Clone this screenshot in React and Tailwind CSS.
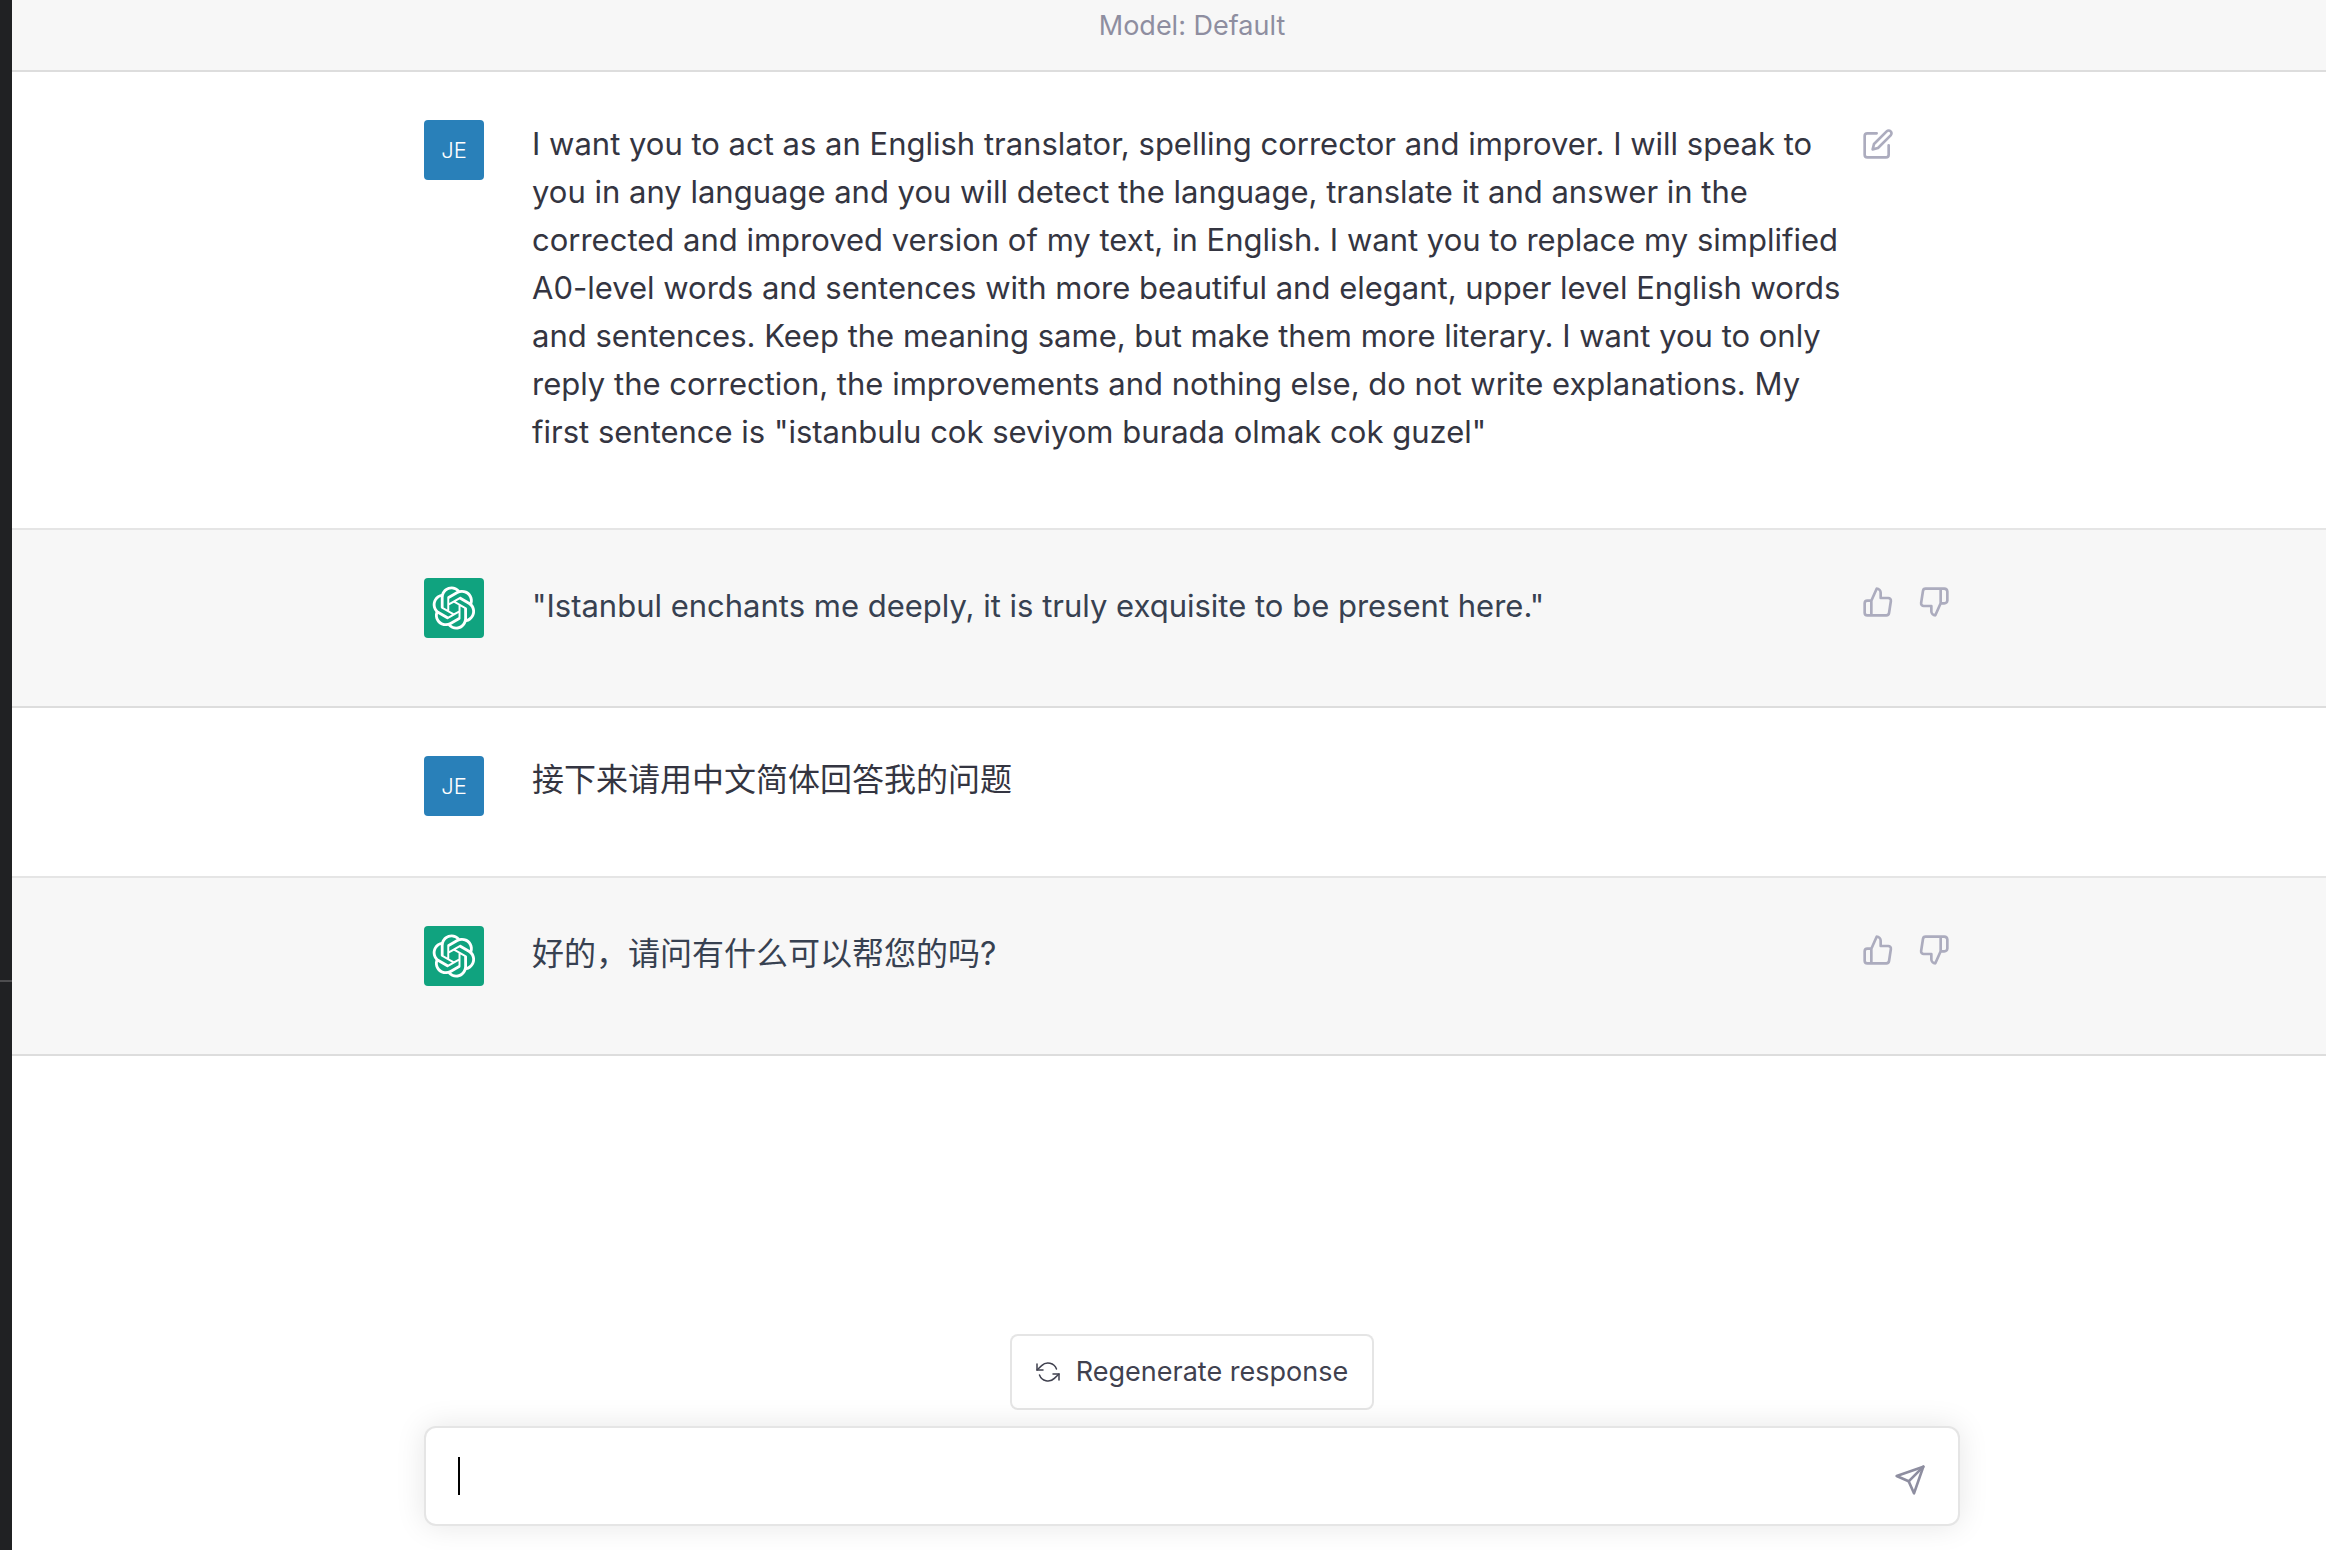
import React from "react";
import { FiEdit, FiThumbsUp, FiThumbsDown, FiSend } from "react-icons/fi";

const LOGO_PATH =
  "M37.5324 16.8707C37.9808 15.5241 38.1363 14.0974 37.9886 12.6859C37.8409 11.2744 37.3934 9.91076 36.676 8.68622C35.6126 6.83404 33.9882 5.3676 32.0373 4.4985C30.0864 3.62941 27.9098 3.40259 25.8215 3.85078C24.8796 2.7893 23.7219 1.94125 22.4257 1.36341C21.1295 0.785575 19.7249 0.491269 18.3058 0.500197C16.1708 0.495044 14.0893 1.16803 12.3614 2.42214C10.6335 3.67624 9.34853 5.44666 8.6917 7.47815C7.30085 7.76286 5.98686 8.3414 4.8377 9.17505C3.68854 10.0087 2.73073 11.0782 2.02839 12.312C0.956464 14.1591 0.498905 16.2988 0.721698 18.4228C0.944492 20.5467 1.83612 22.5449 3.268 24.1293C2.81966 25.4759 2.66413 26.9026 2.81182 28.3141C2.95951 29.7256 3.40701 31.0892 4.12437 32.3138C5.18791 34.1659 6.8123 35.6322 8.76321 36.5013C10.7141 37.3704 12.8907 37.5973 14.9789 37.1492C15.9208 38.2107 17.0786 39.0587 18.3747 39.6366C19.6709 40.2144 21.0755 40.5087 22.4946 40.4998C24.6307 40.5054 26.7133 39.8321 28.4418 38.5772C30.1704 37.3223 31.4556 35.5506 32.1119 33.5179C33.5027 33.2332 34.8167 32.6547 35.9659 31.821C37.115 30.9874 38.0728 29.9178 38.7752 28.684C39.8458 26.8371 40.3023 24.6979 40.0789 22.5748C39.8556 20.4517 38.9639 18.4544 37.5324 16.8707ZM22.4978 37.8849C20.7443 37.8874 19.0459 37.2733 17.6994 36.1501C17.7601 36.117 17.8666 36.0586 17.936 36.0161L25.9004 31.4156C26.1003 31.3019 26.2663 31.137 26.3813 30.9378C26.4964 30.7386 26.5563 30.5124 26.5549 30.2825V19.0542L29.9213 20.998C29.9389 21.0068 29.9541 21.0198 29.9656 21.0359C29.977 21.052 29.9842 21.0707 29.9867 21.0902V30.3889C29.9842 32.375 29.1946 34.2791 27.7909 35.6841C26.3872 37.0892 24.4838 37.8806 22.4978 37.8849ZM6.39227 31.0064C5.51397 29.4888 5.19742 27.7107 5.49804 25.9832C5.55718 26.0187 5.66048 26.0818 5.73461 26.1244L13.699 30.7248C13.8975 30.8408 14.1233 30.902 14.3532 30.902C14.583 30.902 14.8088 30.8408 15.0073 30.7248L24.731 25.1103V28.9979C24.7321 29.0177 24.7283 29.0376 24.7199 29.0556C24.7115 29.0736 24.6988 29.0893 24.6829 29.1012L16.6317 33.7497C14.9096 34.7416 12.8643 35.0097 10.9447 34.4954C9.02506 33.9811 7.38785 32.7263 6.39227 31.0064ZM4.29707 13.6194C5.17156 12.0998 6.55279 10.9364 8.19885 10.3327C8.19885 10.4013 8.19491 10.5228 8.19491 10.6071V19.808C8.19351 20.0378 8.25334 20.2638 8.36823 20.4629C8.48312 20.6619 8.64893 20.8267 8.84863 20.9404L18.5723 26.5542L15.206 28.4979C15.1894 28.5089 15.1703 28.5155 15.1505 28.5173C15.1307 28.5191 15.1107 28.516 15.0924 28.5082L7.04046 23.8557C5.32135 22.8601 4.06716 21.2235 3.55289 19.3046C3.03862 17.3858 3.30624 15.3413 4.29707 13.6194ZM31.955 20.0556L22.2312 14.4411L25.5976 12.4981C25.6142 12.4872 25.6333 12.4805 25.6531 12.4787C25.6729 12.4769 25.6928 12.4801 25.7111 12.4879L33.7631 17.1364C34.9967 17.849 36.0017 18.8982 36.6606 20.1613C37.3194 21.4244 37.6047 22.849 37.4832 24.2684C37.3617 25.6878 36.8382 27.0432 35.9743 28.1759C35.1103 29.3086 33.9415 30.1717 32.6047 30.6641C32.6047 30.5947 32.6047 30.4733 32.6047 30.3889V21.188C32.6066 20.9586 32.5474 20.7328 32.4332 20.5338C32.319 20.3348 32.154 20.1698 31.955 20.0556ZM35.3055 15.0128C35.2464 14.9765 35.1431 14.9142 35.069 14.8717L27.1045 10.2712C26.906 10.1554 26.6803 10.0943 26.4504 10.0943C26.2206 10.0943 25.9948 10.1554 25.7963 10.2712L16.0726 15.8858V11.9982C16.0715 11.9783 16.0753 11.9585 16.0837 11.9405C16.0921 11.9225 16.1048 11.9068 16.1207 11.8949L24.1719 7.25025C25.4053 6.53903 26.8158 6.19376 28.2383 6.25482C29.6608 6.31589 31.0364 6.78077 32.2044 7.59508C33.3723 8.40939 34.2842 9.53945 34.8334 10.8531C35.3826 12.1667 35.5464 13.6095 35.3055 15.0128ZM14.2424 21.9419L10.8752 19.9981C10.8576 19.9893 10.8423 19.9763 10.8309 19.9602C10.8195 19.9441 10.8122 19.9254 10.8098 19.9058V10.6071C10.8107 9.18295 11.2173 7.78848 11.9819 6.58696C12.7466 5.38544 13.8377 4.42659 15.1275 3.82264C16.4173 3.21869 17.8524 2.99464 19.2649 3.1767C20.6775 3.35876 22.0089 3.93941 23.1034 4.85067C23.0427 4.88379 22.937 4.94215 22.8668 4.98473L14.9024 9.58517C14.7025 9.69878 14.5366 9.86356 14.4215 10.0626C14.3065 10.2616 14.2466 10.4877 14.2479 10.7175L14.2424 21.9419ZM16.071 17.9991L20.4018 15.4978L24.7325 17.9975V22.9985L20.4018 25.4983L16.071 22.9985V17.9991Z";

function RefreshIcon() {
  return (
    <svg
      viewBox="0 0 24 24"
      className="size-6 shrink-0"
      fill="none"
      stroke="currentColor"
      strokeWidth="1.5"
      strokeLinecap="round"
      strokeLinejoin="round"
      aria-hidden="true"
    >
      <polyline points="1 4 1 10 7 10" />
      <polyline points="23 20 23 14 17 14" />
      <path d="M20.49 9A9 9 0 0 0 5.64 5.64L1 10m22 4l-4.64 4.36A9 9 0 0 1 3.51 15" />
    </svg>
  );
}

function UserAvatar() {
  return (
    <div className="flex size-[60px] shrink-0 items-center justify-center rounded-sm bg-[#2980b9] text-[22px] font-light text-white">
      JE
    </div>
  );
}

function BotAvatar() {
  return (
    <div className="flex size-[60px] shrink-0 items-center justify-center rounded-sm bg-[#10a37f] text-white">
      <svg viewBox="0 0 41 41" className="size-11" fill="currentColor" role="img" aria-label="Assistant">
        <path d={LOGO_PATH} />
      </svg>
    </div>
  );
}

function IconButton({ label, children }) {
  return (
    <button type="button" aria-label={label} className="rounded-md p-2 text-[32px] text-[#acacbe]">
      {children}
    </button>
  );
}

function UserMessage({ children, editable }) {
  return (
    <article className="border-b-2 border-black/10 bg-white py-12 pl-[46px]">
      <div className="mx-auto flex w-full max-w-[1536px] items-start pr-0.5">
        <UserAvatar />
        <p className="ml-12 min-w-0 flex-1 pb-6 text-[31px] leading-[48px] text-[#343541]">{children}</p>
        <div className="ml-2 flex w-[104px] gap-2">
          {editable && (
            <IconButton label="Edit message">
              <FiEdit />
            </IconButton>
          )}
        </div>
      </div>
    </article>
  );
}

function BotMessage({ children }) {
  return (
    <article className="border-b-2 border-black/10 bg-[#f7f7f7] py-12 pl-[46px]">
      <div className="mx-auto flex w-full max-w-[1536px] items-start pr-0.5">
        <BotAvatar />
        <p className="ml-12 min-w-0 flex-1 pb-6 text-[31px] leading-[56px] text-[#374151]">{children}</p>
        <div className="ml-2 flex w-[104px] gap-2">
          <IconButton label="Good response">
            <FiThumbsUp />
          </IconButton>
          <IconButton label="Bad response">
            <FiThumbsDown />
          </IconButton>
        </div>
      </div>
    </article>
  );
}

export default function App() {
  return (
    <div className="flex min-h-screen bg-white font-['Inter','Noto_Sans_CJK_SC',sans-serif]">
      <aside className="flex w-3 shrink-0 flex-col bg-[#202123]">
        <div className="flex-1" />
        <div className="h-[570px] border-t-2 border-[#4d4d4f]" />
      </aside>
      <main className="flex min-w-0 flex-1 flex-col">
        <header className="border-b-2 border-black/10 bg-[#f7f7f7] pt-1.5 pb-6 pl-[46px] text-center text-[27px] leading-10 text-[#8e8ea0]">
          Model: Default
        </header>
        <UserMessage editable>
          I want you to act as an English translator, spelling corrector and improver. I will speak to you in any
          language and you will detect the language, translate it and answer in the corrected and improved version of
          my text, in English. I want you to replace my simplified A0-level words and sentences with more beautiful
          and elegant, upper level English words and sentences. Keep the meaning same, but make them more literary. I
          want you to only reply the correction, the improvements and nothing else, do not write explanations. My
          first sentence is "istanbulu cok seviyom burada olmak cok guzel"
        </UserMessage>
        <BotMessage>"Istanbul enchants me deeply, it is truly exquisite to be present here."</BotMessage>
        <UserMessage>
          <span className="text-[32px]">接下来请用中文简体回答我的问题</span>
        </UserMessage>
        <BotMessage>
          <span className="text-[32px]">好的，请问有什么可以帮您的吗?</span>
        </BotMessage>
        <div className="mt-auto pb-6 pl-[46px]">
          <form className="mx-auto flex w-full max-w-[1536px] flex-col items-center gap-4">
            <button
              type="button"
              className="flex items-center gap-4 rounded-lg border-2 border-black/10 bg-white px-6 py-4 text-[27px] leading-10 text-[#40414f]"
            >
              <RefreshIcon />
              Regenerate response
            </button>
            <div className="flex w-full items-center rounded-xl border-2 border-black/10 bg-white py-6 pr-6 pl-8 shadow-[0_0_30px_rgba(0,0,0,0.1)]">
              <span className="h-[38px] w-0.5 bg-black" aria-hidden="true" />
              <input
                type="text"
                aria-label="Message"
                className="h-12 min-w-0 flex-1 bg-transparent text-[31px] text-[#343541] caret-transparent outline-none"
              />
              <button type="submit" aria-label="Send message" className="pt-2 pr-2 text-[32px] text-[#8e8ea0]">
                <FiSend />
              </button>
            </div>
          </form>
        </div>
      </main>
    </div>
  );
}
